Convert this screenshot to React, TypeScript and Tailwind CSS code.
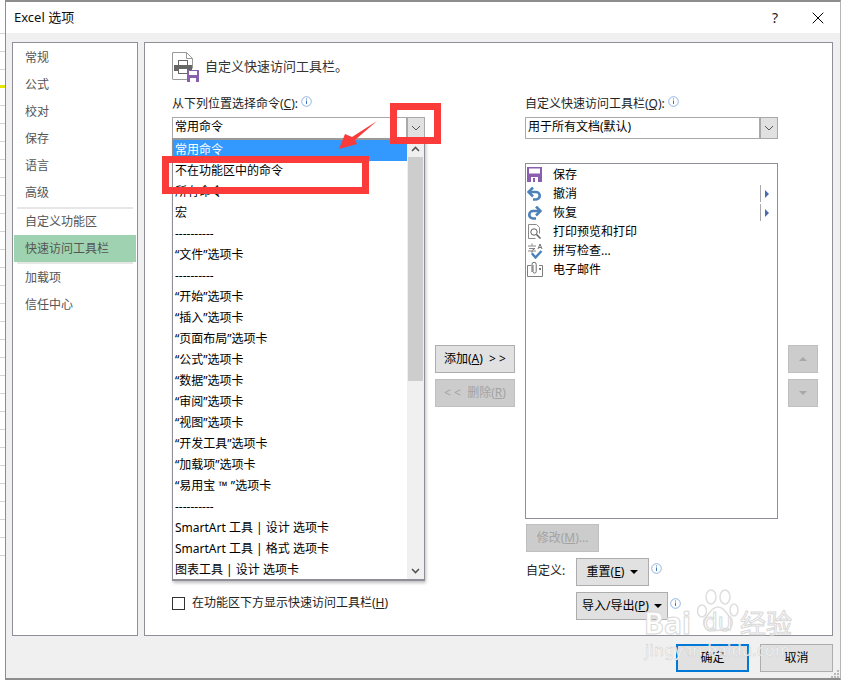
import React from 'react';
import { X } from 'lucide-react';

const FONT = 'font-["Noto_Sans","Noto_Sans_CJK_SC",sans-serif]';

const sideTop = ['常规', '公式', '校对', '保存', '语言', '高级'];
const dropdownItems = [
  '常用命令', '不在功能区中的命令', '所有命令', '宏', '----------', '“文件”选项卡', '----------',
  '“开始”选项卡', '“插入”选项卡', '“页面布局”选项卡', '“公式”选项卡', '“数据”选项卡', '“审阅”选项卡',
  '“视图”选项卡', '“开发工具”选项卡', '“加载项”选项卡', '“易用宝 ™ ”选项卡', '----------',
  'SmartArt 工具 | 设计 选项卡', 'SmartArt 工具 | 格式 选项卡', '图表工具 | 设计 选项卡',
];

function Help() {
  return (
    <svg width="11" height="11" viewBox="0 0 11 11" className="shrink-0">
      <circle cx="5.5" cy="5.5" r="4.8" fill="#fff" stroke="#8fb4e0" />
      <rect x="5" y="2.5" width="1" height="1" fill="#3f78b8" />
      <rect x="5" y="4.5" width="1" height="3.5" fill="#3f78b8" />
    </svg>
  );
}

function Chevron() {
  return (
    <svg width="10" height="6" viewBox="0 0 10 6">
      <path d="M1 1l4 4 4-4" fill="none" stroke="#555" strokeWidth="1" />
    </svg>
  );
}

function Combo({ text }: { text: string }) {
  return (
    <div className="h-[22px] w-[253px] border border-[#a9a9a9] bg-white flex items-center justify-between">
      <span className="pl-[2px] pb-[2px] text-[12px] text-black">{text}</span>
      <div className="h-[20px] w-[18px] bg-[#e1e1e1] border-l-[2px] border-[#a9a9a9] flex items-center justify-center">
        <Chevron />
      </div>
    </div>
  );
}

function Btn({ children, className = '', disabled = false }: { children: React.ReactNode; className?: string; disabled?: boolean }) {
  return (
    <div
      className={`h-[28px] border flex items-center justify-center text-[12px] ${
        disabled ? 'bg-[#cccccc] border-[#bfbfbf] text-[#a3a3a3]' : 'bg-[#e1e1e1] border-[#adadad] text-black'
      } ${className}`}
    >
      {children}
    </div>
  );
}

function SaveIcon() {
  return (
    <svg width="15" height="15" viewBox="0 0 15 15">
      <rect width="15" height="15" fill="#8a5fae" />
      <rect x="2" y="1.5" width="11" height="5" fill="#fff" />
      <rect x="4" y="10" width="7" height="5" fill="#fff" />
      <rect x="6" y="11" width="2" height="4" fill="#8a5fae" />
    </svg>
  );
}

function UndoIcon({ flip = false }: { flip?: boolean }) {
  return (
    <svg width="15" height="14" viewBox="0 0 15 14" style={flip ? { transform: 'scaleX(-1)' } : undefined}>
      <path d="M2 5h7a3.700 3.700 0 0 1 0 7.500H6" fill="none" stroke="#4d82b8" strokeWidth="2.6" />
      <path d="M6 0.500L1.500 5 6 9.500" fill="none" stroke="#4d82b8" strokeWidth="2.6" />
    </svg>
  );
}

function PreviewIcon() {
  return (
    <svg width="15" height="16" viewBox="0 0 15 16">
      <path d="M1.5 0.5h8l3 3v6M1.5 0.5v14h7" fill="none" stroke="#8a8a8a" />
      <circle cx="7" cy="8" r="3.2" fill="#fff" stroke="#5f5f5f" />
      <path d="M9.5 10.5l4 4" stroke="#5f5f5f" strokeWidth="1.6" />
    </svg>
  );
}

function SpellIcon() {
  return (
    <svg width="17" height="16" viewBox="0 0 17 16">
      <path d="M1 3h8M5 .5v2M2 5.5h6l-3 2v3.5M1 8h8" fill="none" stroke="#777" strokeWidth="0.9" />
      <path d="M11 6l2-5 2 5M12 4.5h2" fill="none" stroke="#666" strokeWidth="0.9" />
      <path d="M5 10.5l3.5 4 6-6.5" fill="none" stroke="#4d82b8" strokeWidth="2.4" />
    </svg>
  );
}

function MailIcon() {
  return (
    <svg width="16" height="15" viewBox="0 0 16 15">
      <path d="M4 3.5H.5v11h15v-11H12" fill="none" stroke="#7d7d7d" />
      <path d="M6 3v6.5a1.6 1.6 0 0 0 3.2 0V2.4a2 2 0 0 0-4.200 0V10" fill="none" stroke="#6d6d6d" />
      <rect x="12" y="6" width="2" height="2" fill="#7d7d7d" />
    </svg>
  );
}

function ListRow({ icon, text, more = false }: { icon: React.ReactNode; text: string; more?: boolean }) {
  return (
    <div className="h-[19px] flex items-center">
      <div className="w-[27px] pl-[1px] flex items-center shrink-0">{icon}</div>
      <span className="text-[12px] text-black flex-1">{text}</span>
      {more && (
        <div className="w-[16px] h-[17px] border-l border-[#a9a9a9] flex items-center pl-[4px] mr-[1px]">
          <div className="w-0 h-0 border-y-[4px] border-y-transparent border-l-[4px] border-l-[#4a6cab]" />
        </div>
      )}
    </div>
  );
}

function Caret() {
  return <div className="w-0 h-0 border-x-[4px] border-x-transparent border-t-[4px] border-t-black" />;
}

function PrinterHeader() {
  return (
    <svg width="28" height="30" viewBox="0 0 28 30" className="shrink-0">
      <path d="M.5 27.500V.5h14l6 6v10" fill="none" stroke="#9a9a9a" />
      <path d="M14.500 .5v6h6" fill="none" stroke="#9a9a9a" />
      <rect x="1" y="27" width="14" height="1" fill="#9a9a9a" />
      <rect x="6.500" y="8.500" width="9" height="5" fill="#fff" stroke="#666" />
      <rect x="2" y="13" width="18" height="6" fill="#666" />
      <rect x="6.500" y="16.500" width="9" height="5" fill="#fff" stroke="#666" />
      <rect x="15" y="18" width="12" height="12" fill="#8a5fae" />
      <rect x="17" y="19" width="8" height="4" fill="#fff" />
      <rect x="18" y="26" width="6" height="4" fill="#fff" />
    </svg>
  );
}

function SheetStrip() {
  return (
    <div className="w-[5px] h-full shrink-0 bg-white flex flex-col pt-[16px]">
      {Array.from({ length: 30 }).map((_, i) => (
        <div key={i} className={`h-[18px] shrink-0 border-b ${i === 3 ? 'border-[#e6e600] border-b-[3px]' : 'border-[#d4d4d4]'}`} />
      ))}
    </div>
  );
}

function Annotations() {
  return (
    <>
      <div className="absolute left-[390px] top-[103px] w-[51px] h-[41px] border-[7px] border-[#fb3a3a]" />
      <div className="absolute left-[162px] top-[156px] w-[207px] h-[38px] border-[7px] border-[#fb3a3a]" />
      <svg width="45" height="34" viewBox="0 0 45 34" className="absolute left-[337px] top-[119px]">
        <path d="M40 2L15 18 8 15 2 30l18-5-2-4z" fill="#fb3a3a" />
      </svg>
    </>
  );
}

function Watermark() {
  return (
    <div className="absolute left-[644px] top-[588px] w-[160px] h-[76px] pointer-events-none text-white/90 [-webkit-text-stroke:1px_#d9d9d9]">
      <svg width="46" height="48" viewBox="0 0 46 48" className="absolute left-[52px] top-[1px]">
        <g fill="#fff" fillOpacity="0.6" stroke="#dedede" strokeWidth="1.5">
          <ellipse cx="6" cy="22" rx="4.500" ry="6" />
          <ellipse cx="15" cy="8" rx="5" ry="7" />
          <ellipse cx="29" cy="8" rx="5" ry="7" />
          <ellipse cx="38" cy="21" rx="4" ry="6" />
          <path d="M22 18c-6 0-8 6-12 10-5 5-1 15 6 14 4 0 8-2 12 0 7 1 11-9 6-14-4-4-6-10-12-10z" />
        </g>
      </svg>
      <span className={`absolute left-0 top-[17px] text-[30px] leading-[36px] font-bold ${FONT}`}>Bai</span>
      <span className={`absolute left-[59px] top-[18px] text-[24px] leading-[30px] ${FONT}`}>du</span>
      <span className={`absolute left-[96px] top-[20px] text-[26px] leading-[30px] ${FONT}`}>经验</span>
      <span className={`absolute left-[1px] top-[52px] text-[16px] leading-[20px] tracking-[0.4px] whitespace-nowrap ${FONT} [-webkit-text-stroke:0.5px_#cfcfcf]`}>jingyan.baidu.com</span>
    </div>
  );
}

export default function App() {
  return (
    <div className={`relative w-[841px] h-[680px] overflow-hidden flex bg-white ${FONT}`}>
      <SheetStrip />
      <div className="flex-1 h-full flex flex-col border-y-2 border-l border-r border-[#8d8d8d] border-r-[#b5b5b5] bg-[#f0f0f0]">
        {/* title bar */}
        <div className="h-[31px] shrink-0 bg-white flex items-center pl-[8px] pr-[12px]">
          <span className="text-[13px] text-[#111] flex-1">Excel 选项</span>
          <span className="text-[14px] text-[#222] mr-[30px]">?</span>
          <X size={20} strokeWidth={1.2} className="text-black" />
        </div>

        <div className="flex-1 flex gap-[6px] pl-[6px] pr-[7px] pt-[9px]">
          {/* sidebar */}
          <div className="w-[126px] h-[594px] shrink-0 bg-white border border-[#8f8f98] pt-[1px] px-[1px] text-[12px] text-[#555]">
            {sideTop.map(t => (
              <div key={t} className="h-[27px] flex items-center pl-[11px]">{t}</div>
            ))}
            <div className="h-[2px] mx-[3px] mt-[1px] bg-[#e6e6e6]" />
            <div className="h-[26px] flex items-center pl-[11px]">自定义功能区</div>
            <div className="h-[27px] flex items-center pl-[11px] bg-[#9fd2b0]">快速访问工具栏</div>
            <div className="h-[2px] mx-[3px] bg-[#e6e6e6]" />
            <div className="h-[27px] flex items-center pl-[11px]">加载项</div>
            <div className="h-[27px] flex items-center pl-[11px]">信任中心</div>
          </div>

          {/* main panel */}
          <div className="flex-1 h-[594px] bg-white border border-[#8f8f98] pl-[27px] pt-[9px]">
            <div className="h-[30px] flex items-center gap-[5px]">
              <PrinterHeader />
              <span className="text-[13px] text-[#333] mt-[-1px]">自定义快速访问工具栏。</span>
            </div>

            <div className="flex mt-[14px]">
              <div className="w-[253px] shrink-0">
                <div className="h-[21px] flex items-start gap-[3px] text-[12px] text-[#222]">
                  <span className="mt-[-1px]">从下列位置选择命令(<span className="underline">C</span>):</span>
                  <Help />
                </div>
                <Combo text="常用命令" />
                <div className="h-[457px]" />
                <div className="h-[14px] flex items-center gap-[7px] text-[12px] text-[#222] whitespace-nowrap">
                  <div className="w-[13px] h-[13px] border border-[#333] bg-white shrink-0" />
                  <span>在功能区下方显示快速访问工具栏(<span className="underline">H</span>)</span>
                </div>
              </div>

              <div className="w-[80px] ml-[10px] shrink-0 pt-[249px] flex flex-col gap-[6px]">
                <Btn>添加(<span className="underline">A</span>)&nbsp;&nbsp;&gt; &gt;</Btn>
                <Btn disabled>&lt; &lt;&nbsp;&nbsp;删除(<span className="underline">R</span>)</Btn>
              </div>

              <div className="w-[253px] ml-[10px] shrink-0">
                <div className="h-[21px] flex items-start gap-[3px] text-[12px] text-[#222]">
                  <span className="mt-[-1px]">自定义快速访问工具栏(<span className="underline">Q</span>):</span>
                  <Help />
                </div>
                <Combo text="用于所有文档(默认)" />
                <div className="h-[356px] mt-[24px] border border-[#8f8f98] bg-white pt-[1px]">
                  <ListRow icon={<SaveIcon />} text="保存" />
                  <ListRow icon={<UndoIcon />} text="撤消" more />
                  <ListRow icon={<UndoIcon flip />} text="恢复" more />
                  <ListRow icon={<PreviewIcon />} text="打印预览和打印" />
                  <ListRow icon={<SpellIcon />} text="拼写检查..." />
                  <ListRow icon={<MailIcon />} text="电子邮件" />
                </div>
                <Btn disabled className="w-[73px] ml-[1px] mt-[5px]">修改(<span className="underline">M</span>)...</Btn>
                <div className="flex mt-[6px] pl-[1px]">
                  <span className="w-[50px] text-[12px] text-[#222] pt-[4px]">自定义:</span>
                  <div className="flex flex-col gap-[6px]">
                    <div className="flex items-start gap-[1px]">
                      <Btn className="w-[73px] gap-[6px]">
                        <span>重置(<span className="underline">E</span>)</span>
                        <Caret />
                      </Btn>
                      <div className="pt-[5px] pl-[1px]"><Help /></div>
                    </div>
                    <div className="flex items-start gap-[1px]">
                      <Btn className="w-[92px] gap-[5px]">
                        <span>导入/导出(<span className="underline">P</span>)</span>
                        <Caret />
                      </Btn>
                      <div className="pt-[6px] pl-[1px]"><Help /></div>
                    </div>
                  </div>
                </div>
              </div>

              <div className="w-[30px] ml-[10px] shrink-0 pt-[249px] flex flex-col gap-[6px]">
                <Btn disabled>
                  <div className="w-0 h-0 border-x-[4px] border-x-transparent border-b-[4px] border-b-[#a8a8a8]" />
                </Btn>
                <Btn disabled>
                  <div className="w-0 h-0 border-x-[4px] border-x-transparent border-t-[4px] border-t-[#a8a8a8]" />
                </Btn>
              </div>
            </div>
          </div>
        </div>

        {/* footer */}
        <div className="h-[39px] shrink-0 flex justify-end gap-[11px] pr-[7px] pt-[5px]">
          <Btn className="w-[73px] !border-2 !border-[#0078d7]">确定</Btn>
          <Btn className="w-[73px]">取消</Btn>
        </div>
      </div>

      {/* open dropdown */}
      <div className="absolute left-[172px] top-[138px] w-[253px] h-[443px] flex bg-white border-x border-b-2 border-[#8f8f98] border-t-2 border-t-[#9a9a9a] shadow-[1px_2px_3px_rgba(0,0,0,0.25)]">
        <div className="flex-1 text-[12px] text-black">
          {dropdownItems.map((t, i) => (
            <div
              key={i}
              className={`h-[21px] flex items-center pl-[2px] pb-[2px] whitespace-pre ${i === 0 ? 'bg-[#3399ff] text-white' : ''}`}
            >
              {t}
            </div>
          ))}
        </div>
        <div className="w-[17px] h-full bg-[#f0f0f0] flex flex-col">
          <div className="h-[17px] flex items-center justify-center">
            <svg width="9" height="6" viewBox="0 0 9 6"><path d="M1 5l3.500-3.500L8 5" fill="none" stroke="#555" strokeWidth="1.6" /></svg>
          </div>
          <div className="h-[224px] mx-[1px] bg-[#cdcdcd]" />
          <div className="flex-1" />
          <div className="h-[17px] flex items-center justify-center">
            <svg width="9" height="6" viewBox="0 0 9 6"><path d="M1 1l3.500 3.500L8 1" fill="none" stroke="#555" strokeWidth="1.6" /></svg>
          </div>
        </div>
      </div>

      <Annotations />
      <Watermark />
      {/* resize grip */}
      <div className="absolute left-[831px] top-[670px] grid grid-cols-3 gap-[1px]">
        {[0, 1, 2, 3, 4, 5, 6, 7, 8].map(i => (
          <div key={i} className={`w-[2px] h-[2px] ${[0, 1, 3].includes(i) ? '' : 'bg-[#b8b8b8]'}`} />
        ))}
      </div>
    </div>
  );
}
